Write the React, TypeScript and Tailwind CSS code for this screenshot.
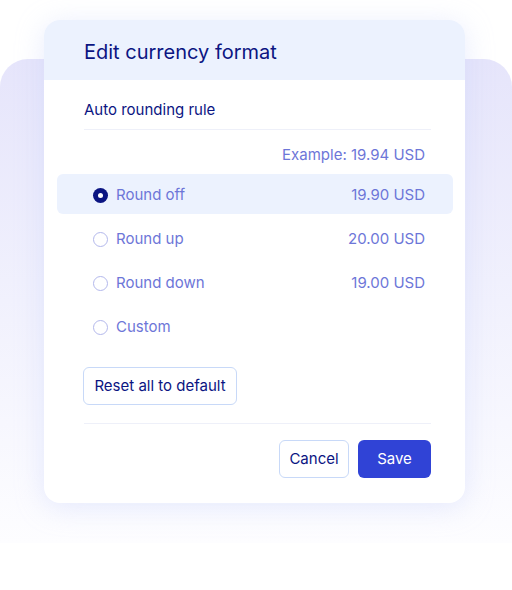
import React, { useState } from 'react';

const options = [
  { id: 'off', label: 'Round off', value: '19.90 USD' },
  { id: 'up', label: 'Round up', value: '20.00 USD' },
  { id: 'down', label: 'Round down', value: '19.00 USD' },
  { id: 'custom', label: 'Custom', value: '' }
];

function Radio({ checked }: { checked: boolean }) {
  if (checked) {
    return (
      <span className="flex h-[15px] w-[15px] items-center justify-center rounded-full bg-[#0b1582]">
        <span className="h-[5px] w-[5px] rounded-full bg-white" />
      </span>
    );
  }
  return <span className="h-[15px] w-[15px] rounded-full border border-[#b3b8ec] bg-white" />;
}

export default function App() {
  const [selected, setSelected] = useState<string>('off');

  return (
    <div
      className="relative h-[590px] w-[512px] overflow-hidden bg-white pt-5"
      style={{ fontFamily: 'Inter, "Noto Sans", sans-serif' }}
    >
      {/* lavender panel behind the card */}
      <div className="absolute left-0 right-0 top-[59px] h-[484px] rounded-t-[28px] bg-gradient-to-b from-[#e6e5fb] via-[#f1f1fd] to-[#fdfdff]" />

      <div className="relative ml-[44px] w-[421px] overflow-hidden rounded-2xl bg-white shadow-[0_4px_28px_rgba(190,200,250,0.35)]">
        <div className="flex h-[60px] items-center bg-[#ecf2fe] px-10 pt-1">
          <h1 className="text-[20px] text-[#0b1582]">Edit currency format</h1>
        </div>

        <div className="pl-10 pr-[34px] pb-[25px]">
          <div className="border-b border-[#eef0f9] pt-5 pb-[9px] text-[15px] leading-5 text-[#0b1582]">
            Auto rounding rule
          </div>

          <div className="mt-[15px] pr-1.5 text-right text-[15px] leading-5 text-[#6d76d8]">
            Example: 19.94 USD
          </div>

          <div className="-ml-[27px] -mr-[22px] mt-[9px] flex flex-col gap-1">
            {options.map((o) => (
              <button
                key={o.id}
                onClick={() => setSelected(o.id)}
                className={
                  'flex h-10 items-center justify-between rounded-md pl-[36px] pr-[28px] pt-[2px] text-[15px] text-[#6d76d8] ' +
                  (selected === o.id ? 'bg-[#ecf2fe]' : 'bg-white')
                }
              >
                <span className="flex items-center gap-2">
                  <Radio checked={selected === o.id} />
                  {o.label}
                </span>
                <span>{o.value}</span>
              </button>
            ))}
          </div>

          <button className="mt-[21px] -ml-px h-[38px] w-[154px] rounded-md border border-[#c8d9f8] text-[15px] text-[#0b1582]">
            Reset all to default
          </button>

          <div className="mt-[18px] border-t border-[#eef0f9]" />

          <div className="mt-[16px] flex justify-end gap-[9px]">
            <button className="h-[38px] w-[70px] rounded-md border border-[#c8d9f8] text-[15px] text-[#0b1582]">
              Cancel
            </button>
            <button className="h-[38px] w-[73px] rounded-md bg-[#3043d6] text-[15px] text-white">
              Save
            </button>
          </div>
        </div>
      </div>
    </div>
  );
}
